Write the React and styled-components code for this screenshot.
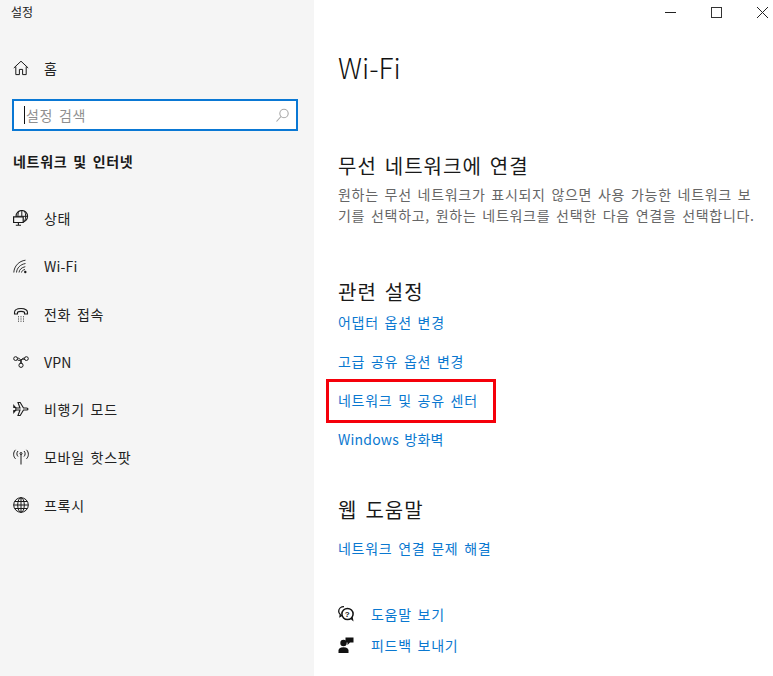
import React from 'react';
import styled, { createGlobalStyle } from 'styled-components';

const Global = createGlobalStyle`
  html, body { margin: 0; padding: 0; background: #fff; }
  body { font-family: "Noto Sans CJK KR", "Noto Sans", sans-serif; overflow: hidden; letter-spacing: .7px; word-spacing: 2px; }
`;
const Win = styled.div`display: flex; width: 773px; height: 676px; overflow: hidden;`;
const Side = styled.aside`width: 314px; flex: none; background: #f5f5f5; display: flex; flex-direction: column; padding-left: 12px; box-sizing: border-box;`;
const AppTitle = styled.div`font-size: 12px; line-height: 16px; margin: 4px 0 0 -1px; color: #222; letter-spacing: 0;`;
const Home = styled.div`display: flex; align-items: center; height: 24px; margin-top: 36px; color: #222; font-size: 14px;`;
const IconSlot = styled.span`width: 16px; height: 16px; flex: none; margin-left: 1px; margin-right: 15px; display: flex; color: #1a1a1a;`;
const Search = styled.div`box-sizing: border-box; width: 286px; height: 32px; margin-top: 19px; background: #fff; border: 2px solid #0a78d4; display: flex; align-items: center; padding: 0 6px 0 10px; color: #8f8f8f; font-size: 14px;`;
const Caret = styled.span`width: 1px; height: 18px; background: #111; margin-right: 1px;`;
const Grow = styled.span`flex: 1;`;
const SectionHead = styled.div`font-size: 14px; font-weight: 700; line-height: 20px; margin: 20px 0 0 1px; color: #1a1a1a;`;
const Nav = styled.nav`display: flex; flex-direction: column; margin-top: 23.6px;`;
const NavRow = styled.div`display: flex; align-items: center; height: 47.7px; font-size: 14px; color: #222; letter-spacing: ${p => (p.$latin ? '.2px' : '.7px')};`;
const Main = styled.main`flex: 1; position: relative; padding-left: 24px; display: flex; flex-direction: column;`;
const Controls = styled.div`position: absolute; top: 0; right: -12px; display: flex;`;
const Ctl = styled.span`width: 46px; height: 25px; display: flex; align-items: center; justify-content: center;`;
const Title = styled.h1`margin: 46px 0 0; font-size: 28px; font-weight: 300; line-height: 42px; color: #111; letter-spacing: 0; word-spacing: 0;`;
const H2 = styled.h2`margin: ${p => p.$top}px 0 0; font-size: 20px; font-weight: 400; line-height: 28px; color: #1a1a1a; letter-spacing: 1px; word-spacing: 2.5px;`;
const Para = styled.p`margin: 4px 0 0; font-size: 14px; line-height: 21px; color: #666; white-space: nowrap;`;
const LinkList = styled.div`display: flex; flex-direction: column; margin-top: ${p => p.$top}px;`;
const Link = styled.a`display: block; font-size: 14px; height: 39px; line-height: 20px; color: #0a78d0; width: max-content; position: relative; letter-spacing: ${p => (p.$latin ? '.2px' : '.7px')};`;
const Marked = styled.span`position: absolute; left: -12px; top: -11px; width: 170px; height: 44px; box-sizing: border-box; border: 3.500px solid #f5000a;`;
const Help = styled.div`display: flex; align-items: center; height: 31px; color: #0a78d0; font-size: 14px;`;
const HelpList = styled.div`display: flex; flex-direction: column; margin-top: 21px;`;
const HelpIcon = styled.span`width: 16px; height: 16px; margin-right: 17px; display: flex;`;

const Svg = ({ children }) => (
  <svg width="16" height="16" viewBox="0 0 16 16" fill="none" stroke="currentColor" strokeWidth="1">{children}</svg>
);
const icons = {
  home: <Svg><path d="M.8 8 8 1.200 15.200 8M2.800 6.600v8h3.600V9.400h3.200v5.200h3.600v-8" /></Svg>,
  status: <Svg><circle cx="8.800" cy="6.300" r="5.800" strokeWidth="1.100" /><path d="M3 6.300h11.600M8.800.5v11.600M6 1c-1 2-1.200 4-1 6M11.600 1.200c1.500 3 1.500 7 0 10" /><path d="M.6 6.800h9.600v5.700H.6z" fill="#f5f5f5" strokeWidth="1.200" /><path d="M5.400 12.500v2.500M2.800 15.200h5.200" strokeWidth="1.100" /></Svg>,
  wifi: <Svg><path d="M.8 14.500C1.200 8 6 3 12.500 2.200M3.500 14.500c.4-4.500 3.600-8 9-9M6 14.500c.4-3 2.500-5 6.300-5.800M8.500 14.500c.3-1.500 1.200-2.500 3.500-3" strokeWidth=".9" /><circle cx="12.300" cy="14" r="1.200" fill="currentColor" stroke="none" /></Svg>,
  dial: <Svg><path d="M1.500 6.500C1.500 1.200 14.500 1.200 14.500 6.500v1.500h-3V6.200c-1.500-1.100-5.500-1.100-7 0v1.800h-3z" strokeWidth="1.100" /><path d="M5 10.800h1M7.500 10.800h1M10 10.800h1M5 13h1M7.500 13h1M10 13h1M5 15.200h1M7.500 15.200h1M10 15.200h1" strokeWidth=".9" /></Svg>,
  vpn: <Svg><circle cx="2.600" cy="4.600" r="1.900" /><circle cx="13.400" cy="4.600" r="1.900" /><circle cx="8" cy="11.300" r="2.100" /><path d="M4.200 5.600c1.200 1 2.500 1.200 3.800.2 1.300-1 2.600-.8 3.800-.2M4.400 3.900c2 .4 4.700 1.700 2.600 5.700M11.600 3.900c-2 .4-4.700 1.700-2.600 5.700" /></Svg>,
  plane: <Svg><path d="M.8 4.500 3 7h4L5 1.500h2.200L10.500 7h3c2 0 2 2 0 2h-3l-3.300 5.500H5L7 9H3l-2.200 2.500V9.500h2v-3h-2z" strokeWidth="1.100" /></Svg>,
  hotspot: <Svg><path d="M8 5v10.500" /><circle cx="8" cy="4.500" r="1" /><path d="M5 2c-1.500 1.500-1.500 4 0 5.500M11 2c1.500 1.500 1.500 4 0 5.500M2.500.8c-2.500 2.500-2.500 6.500 0 9M13.500.8c2.500 2.500 2.500 6.500 0 9" /></Svg>,
  globe: <Svg><circle cx="8" cy="8" r="7.300" /><ellipse cx="8" cy="8" rx="3.300" ry="7.300" /><path d="M.7 8h14.600M1.800 4.500h12.400M1.800 11.500h12.400M8 .7v14.600" /></Svg>,
};
const navItems = [
  ['status', '상태'], ['wifi', 'Wi-Fi', true], ['dial', '전화 접속'], ['vpn', 'VPN', true],
  ['plane', '비행기 모드'], ['hotspot', '모바일 핫스팟'], ['globe', '프록시'],
];

export default function App() {
  return (
    <Win>
      <Global />
      <Side>
        <AppTitle>설정</AppTitle>
        <Home><IconSlot>{icons.home}</IconSlot>홈</Home>
        <Search>
          <Caret />설정 검색<Grow />
          <svg width="15" height="15" viewBox="0 0 15 15" fill="none" stroke="#a8a8a8" strokeWidth="1.100"><circle cx="9" cy="5.500" r="4.200" /><path d="M6 8.500 1.500 13.500" /></svg>
        </Search>
        <SectionHead>네트워크 및 인터넷</SectionHead>
        <Nav>
          {navItems.map(([k, t, latin]) => <NavRow key={k} $latin={latin}><IconSlot>{icons[k]}</IconSlot>{t}</NavRow>)}
        </Nav>
      </Side>
      <Main>
        <Controls>
          <Ctl><svg width="11" height="2"><path d="M0 .5h11" stroke="#222" /></svg></Ctl>
          <Ctl><svg width="11" height="11"><rect x=".5" y=".5" width="10" height="10" fill="none" stroke="#333" /></svg></Ctl>
          <Ctl><svg width="11" height="11"><path d="M0 0l11 11M11 0 0 11" stroke="#222" /></svg></Ctl>
        </Controls>
        <Title>Wi-Fi</Title>
        <H2 $top={64}>무선 네트워크에 연결</H2>
        <Para>원하는 무선 네트워크가 표시되지 않으면 사용 가능한 네트워크 보<br />기를 선택하고, 원하는 네트워크를 선택한 다음 연결을 선택합니다.</Para>
        <H2 $top={52}>관련 설정</H2>
        <LinkList $top={6}>
          <Link>어댑터 옵션 변경</Link>
          <Link>고급 공유 옵션 변경</Link>
          <Link>네트워크 및 공유 센터<Marked /></Link>
          <Link $latin>Windows 방화벽</Link>
        </LinkList>
        <H2 $top={28}>웹 도움말</H2>
        <LinkList $top={14}><Link>네트워크 연결 문제 해결</Link></LinkList>
        <HelpList>
          <Help>
            <HelpIcon><svg width="16" height="16" viewBox="0 0 16 16"><path d="M6 .7C3 .7.7 2.700.7 5.300c0 1.400.6 2.500 1.600 3.300L2 10.500l2.300-1.300" fill="none" stroke="#111" strokeWidth="1.300" /><circle cx="9.500" cy="8" r="5.600" fill="#fff" stroke="#111" strokeWidth="1.500" /><path d="M12 12.500 15.500 15.500l-.8-4.500z" fill="#111" /><text x="9.500" y="11" fontSize="8" fontWeight="700" textAnchor="middle" fontFamily="Liberation Sans" fill="#111">?</text></svg></HelpIcon>
            도움말 보기
          </Help>
          <Help>
            <HelpIcon><svg width="16" height="16" viewBox="0 0 16 16" fill="#111"><circle cx="5.500" cy="6" r="3.200" /><path d="M.5 16v-2.500c0-2 1.500-3.300 5-3.300s5 1.300 5 3.300V16z" /><path d="M7.500.5h8v5h-3.500L9.500 8V5.500h-2z" /></svg></HelpIcon>
            피드백 보내기
          </Help>
        </HelpList>
      </Main>
    </Win>
  );
}
